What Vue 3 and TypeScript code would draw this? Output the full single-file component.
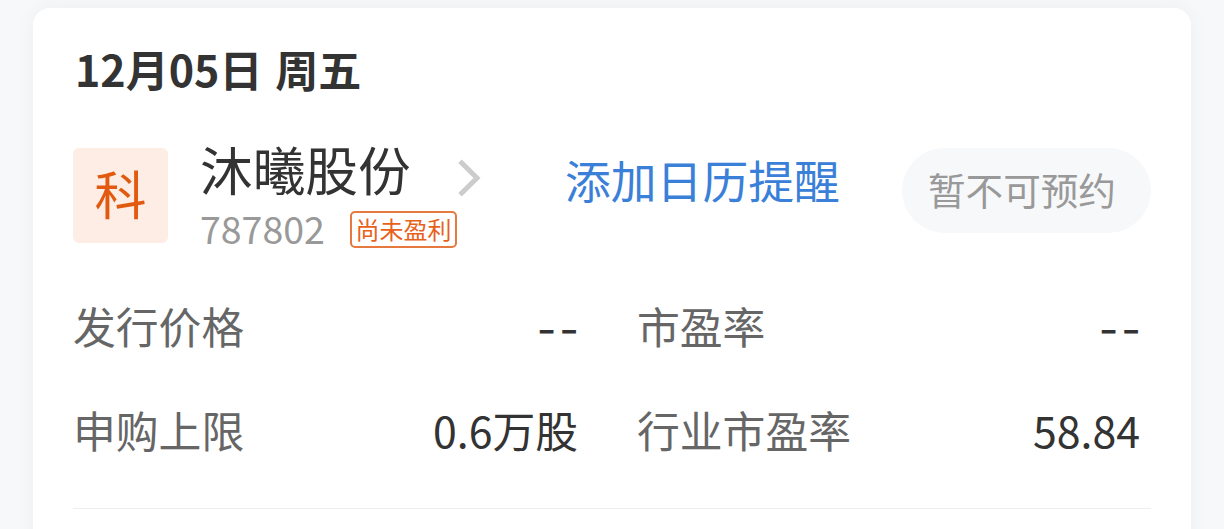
<script setup lang="ts">
interface Metric {
  label: string
  value: string
}

const metrics: Metric[] = [
  { label: '发行价格', value: '--' },
  { label: '市盈率', value: '--' },
  { label: '申购上限', value: '0.6万股' },
  { label: '行业市盈率', value: '58.84' },
]
</script>

<template>
  <div class="page">
    <section class="card">
      <h2 class="date">12月05日 周五</h2>
      <div class="stock">
        <div class="board"><span>科</span></div>
        <div class="info">
          <div class="name">沐曦股份</div>
          <div class="sub">
            <span class="code">787802</span>
            <span class="tag"><span>尚未盈利</span></span>
          </div>
        </div>
        <svg class="arrow" width="24" height="40" viewBox="0 0 24 40" fill="none">
          <path d="M2 3.2 L19 20 L2 36.8" stroke="#cccccc" stroke-width="5" />
        </svg>
        <a class="remind">添加日历提醒</a>
        <button class="reserve" type="button" disabled><span>暂不可预约</span></button>
      </div>
      <div class="metrics">
        <div v-for="m in metrics" :key="m.label" class="metric">
          <span class="label">{{ m.label }}</span>
          <span class="value" :class="{ dash: m.value === '--' }">{{ m.value }}</span>
        </div>
      </div>
    </section>
  </div>
</template>

<style>
body {
  margin: 0;
  overflow: hidden;
}
</style>

<style scoped>
.page {
  box-sizing: border-box;
  height: 529px;
  overflow: hidden;
  padding: 8px 33px 0;
  background: #f7f8fa;
  font-family: 'Noto Sans CJK SC', sans-serif;
  color: #333333;
  white-space: nowrap;
}

.card {
  box-sizing: border-box;
  height: 560px;
  padding: 32px 40px 0;
  background: #ffffff;
  border-radius: 17px;
  box-shadow: 0 0 22px rgba(0, 0, 0, 0.045);
}

.date {
  margin: 0 0 0 2px;
  height: 60px;
  line-height: 57px;
  font-size: 43px;
  font-weight: 700;
  word-spacing: 3px;
}

.stock {
  display: flex;
  align-items: flex-start;
  height: 95px;
  margin-top: 48px;
}

.board {
  width: 95px;
  height: 95px;
  border-radius: 6px;
  background: #fdede4;
  color: #e25a10;
  font-size: 52px;
  line-height: 89px;
  text-align: center;
}

.info {
  width: 258px;
  margin-left: 32px;
}

.name {
  height: 60px;
  margin-top: -9px;
  line-height: 59px;
  font-size: 52.7px;
}

.sub {
  display: flex;
  margin-top: 12px;
  height: 37px;
}

.code {
  width: 150px;
  line-height: 33px;
  font-size: 37.5px;
  color: #999999;
}

.tag {
  box-sizing: border-box;
  width: 107px;
  height: 37px;
  border: 2px solid #e5793f;
  border-radius: 5px;
  color: #e8611b;
  font-size: 24px;
  line-height: 31px;
  text-align: center;
}

.arrow {
  margin-top: 10px;
}

.remind {
  margin-left: 83px;
  line-height: 62px;
  font-size: 45.8px;
  color: #3a80d8;
}

.reserve {
  width: 249px;
  height: 85px;
  margin-left: auto;
  padding: 0 9px 4px 0;
  border: 0;
  border-radius: 43px;
  background: #f7f8fa;
  color: #999999;
  font-family: inherit;
  font-size: 37.6px;
  line-height: 81px;
}

.metrics {
  display: grid;
  grid-template-columns: 505px 503px;
  column-gap: 59px;
  row-gap: 44px;
  margin-top: 53px;
  padding-bottom: 48px;
  border-bottom: 1px solid #eeeeee;
}

.metric {
  display: flex;
  justify-content: space-between;
  height: 60px;
  line-height: 59px;
  font-size: 42.8px;
}

.label {
  color: #666666;
}

.dash {
  padding-top: 4px;
  font-family: Inter, sans-serif;
  letter-spacing: 3px;
  margin-right: -4px;
}
</style>
